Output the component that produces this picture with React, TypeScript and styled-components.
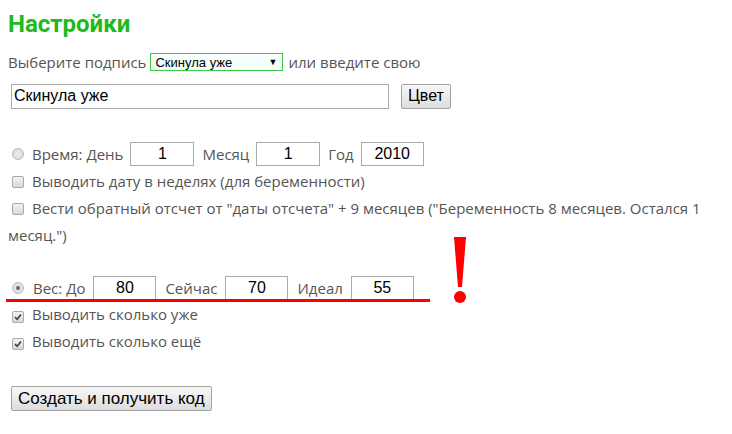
import { createGlobalStyle, styled } from "styled-components";

const GlobalStyle = createGlobalStyle`
  body {
    margin: 0;
    background: #fff;
    font-family: "Open Sans", "Noto Sans", sans-serif;
    color: #555;
  }
`;

const Page = styled.div`
  padding: 8px;
  width: 716px;
  box-sizing: border-box;
`;

const Title = styled.h1`
  margin: 0;
  font-family: Roboto, "Open Sans", sans-serif;
  font-size: 24px;
  line-height: 32px;
  font-weight: 700;
  color: #1dba1d;
`;

const Row = styled.div<{ $top: number; $height?: number; $gap?: number }>`
  display: flex;
  align-items: center;
  gap: ${({ $gap }) => $gap ?? 7}px;
  margin-top: ${({ $top }) => $top}px;
  height: ${({ $height }) => $height ?? 28}px;
  font-size: 15px;
  position: relative;
`;

const SelectBox = styled.div`
  display: flex;
  align-items: center;
  justify-content: space-between;
  width: 133px;
  height: 18px;
  box-sizing: border-box;
  border: 1px solid #3fcb4a;
  background: #f5fffb;
  padding: 0 5px 0 4px;
  font-family: "Liberation Sans", Arial, sans-serif;
  font-size: 13px;
  color: #000;
  margin-left: -3px;
  margin-right: -2px;
`;

const Arrow = styled.span`
  font-size: 9px;
`;

const TextInput = styled.input`
  width: 378px;
  height: 25px;
  box-sizing: border-box;
  border: 1px solid #aaa;
  padding: 0 2px;
  margin: 0 0 0 3px;
  font-family: "Liberation Sans", Arial, sans-serif;
  font-size: 16px;
  color: #000;
  outline: none;
`;

const Button = styled.button<{ $left?: number; $size?: number }>`
  height: 25px;
  box-sizing: border-box;
  border: 1px solid #a3a3a3;
  border-radius: 2px;
  background: linear-gradient(#f8f8f8, #dddddd);
  padding: 0 6px;
  margin-left: ${({ $left }) => $left ?? 0}px;
  font-family: "Liberation Sans", Arial, sans-serif;
  font-size: ${({ $size }) => $size ?? 16}px;
  color: #000;
`;

const NumInput = styled.input<{ $w: number }>`
  width: ${({ $w }) => $w}px;
  height: 24px;
  box-sizing: border-box;
  border: 1px solid #aaa;
  margin: 0 1px 0 0;
  padding: 0;
  text-align: center;
  font-family: "Liberation Sans", Arial, sans-serif;
  font-size: 16px;
  color: #000;
  outline: none;
`;

const Radio = styled.span<{ $on?: boolean }>`
  flex: none;
  width: 12px;
  height: 12px;
  margin: 0 1px 0 4px;
  box-sizing: border-box;
  border-radius: 50%;
  border: 1px solid #b8b8b8;
  background: radial-gradient(circle, #eee, #d6d6d6);
  display: flex;
  align-items: center;
  justify-content: center;
  &::after {
    content: "";
    width: 4px;
    height: 4px;
    border-radius: 50%;
    background: ${({ $on }) => ($on ? "#666" : "transparent")};
  }
`;

const CheckList = styled.div<{ $top?: number }>`
  margin-top: ${({ $top }) => $top ?? 0}px;
  font-size: 15px;
  line-height: 27px;
`;

const CheckLine = styled.div``;

const Box = styled.span`
  display: inline-flex;
  align-items: center;
  justify-content: center;
  vertical-align: -1px;
  width: 12px;
  height: 12px;
  box-sizing: border-box;
  margin: 0 8px 0 4px;
  border: 1px solid #aaa;
  border-radius: 2px;
  background: linear-gradient(#f2f2f2, #d9d9d9);
`;

const RedLine = styled.div`
  position: absolute;
  left: -2px;
  top: 24px;
  width: 424px;
  height: 3px;
  background: #f00;
`;

const Bang = styled.svg`
  position: absolute;
  left: 445px;
  top: -38px;
`;

const Submit = styled.div`
  margin-top: 31px;
  padding-left: 3px;
`;

function Check({ on, children }: { on?: boolean; children: React.ReactNode }) {
  return (
    <CheckLine>
      <Box>
        {on && (
          <svg width="8" height="8" viewBox="0 0 8 8">
            <path d="M1 4.2 L3.1 6.3 L7 1.5" fill="none" stroke="#444" strokeWidth="1.7" />
          </svg>
        )}
      </Box>
      {children}
    </CheckLine>
  );
}

export default function App() {
  return (
    <>
      <GlobalStyle />
      <Page>
        <Title>Настройки</Title>
        <Row $top={8}>
          Выберите подпись
          <SelectBox>
            Скинула уже
            <Arrow>▼</Arrow>
          </SelectBox>
          или введите свою
        </Row>
        <Row $top={7} $height={26}>
          <TextInput defaultValue="Скинула уже" />
          <Button $left={5}>Цвет</Button>
        </Row>

        <Row $top={31}>
          <Radio />
          Время: День
          <NumInput $w={64} defaultValue="1" />
          Месяц
          <NumInput $w={64} defaultValue="1" />
          Год
          <NumInput $w={63} defaultValue="2010" />
        </Row>
        <CheckList>
          <Check>Выводить дату в неделях (для беременности)</Check>
          <Check>
            Вести обратный отсчет от "даты отсчета" + 9 месяцев ("Беременность 8 месяцев. Остался 1
            месяц.")
          </Check>
        </CheckList>

        <Row $top={26} $height={26} $gap={8}>
          <Radio $on />
          Вес: До
          <NumInput $w={63} defaultValue="80" />
          Сейчас
          <NumInput $w={63} defaultValue="70" />
          Идеал
          <NumInput $w={63} defaultValue="55" />
          <RedLine />
          <Bang width="14" height="68" viewBox="0 0 14 68">
            <path d="M1 0 H13 L9 50 H5 Z" fill="#f00" />
            <circle cx="7" cy="60" r="6" fill="#f00" />
          </Bang>
        </Row>
        <CheckList>
          <Check on>Выводить сколько уже</Check>
          <Check on>Выводить сколько ещё</Check>
        </CheckList>

        <Submit>
          <Button $size={17}>Создать и получить код</Button>
        </Submit>
      </Page>
    </>
  );
}
